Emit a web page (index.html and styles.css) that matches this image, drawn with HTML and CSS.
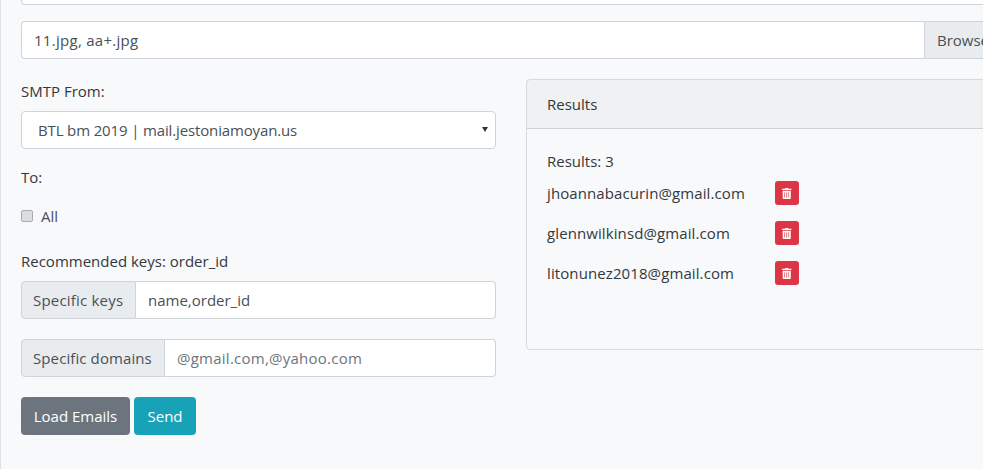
FILE: index.html
```html
<!DOCTYPE html>
<html lang="en">
<head>
<meta charset="utf-8">
<title>Send</title>
<link rel="stylesheet" href="styles.css">
</head>
<body>
<main class="page">
  <div class="top-input"></div>
  <div class="group file">
    <div class="file-name">11.jpg, aa+.jpg</div>
    <div class="addon browse">Browse</div>
  </div>
  <div class="columns">
    <form class="left">
      <label class="label">SMTP From:</label>
      <div class="select-wrap">
        <select class="select"><option>BTL bm 2019 | mail.jestoniamoyan.us</option></select>
      </div>
      <p class="label to">To:</p>
      <label class="check"><input type="checkbox"><span>All</span></label>
      <p class="label keys">Recommended keys: order_id</p>
      <div class="group spaced">
        <span class="addon prefix keys-prefix">Specific keys</span>
        <input class="input" type="text" value="name,order_id">
      </div>
      <div class="group spaced">
        <span class="addon prefix domains-prefix">Specific domains</span>
        <input class="input" type="text" placeholder="@gmail.com,@yahoo.com">
      </div>
      <div class="actions">
        <button class="btn grey" type="button">Load Emails</button>
        <button class="btn teal" type="button">Send</button>
      </div>
    </form>
    <section class="card">
      <header class="card-head">Results</header>
      <div class="card-body">
        <p class="count">Results: 3</p>
        <div class="result"><span class="email">jhoannabacurin@gmail.com</span><button class="del" type="button" aria-label="Delete"><svg viewBox="0 0 448 512"><path d="M32 464a48 48 0 0 0 48 48h288a48 48 0 0 0 48-48V128H32zm272-256a16 16 0 0 1 32 0v224a16 16 0 0 1-32 0zm-96 0a16 16 0 0 1 32 0v224a16 16 0 0 1-32 0zm-96 0a16 16 0 0 1 32 0v224a16 16 0 0 1-32 0zM432 32H312l-9.4-18.7A24 24 0 0 0 281.1 0H166.8a23.72 23.72 0 0 0-21.4 13.3L136 32H16A16 16 0 0 0 0 48v32a16 16 0 0 0 16 16h416a16 16 0 0 0 16-16V48a16 16 0 0 0-16-16z"/></svg></button></div>
        <div class="result"><span class="email">glennwilkinsd@gmail.com</span><button class="del" type="button" aria-label="Delete"><svg viewBox="0 0 448 512"><path d="M32 464a48 48 0 0 0 48 48h288a48 48 0 0 0 48-48V128H32zm272-256a16 16 0 0 1 32 0v224a16 16 0 0 1-32 0zm-96 0a16 16 0 0 1 32 0v224a16 16 0 0 1-32 0zm-96 0a16 16 0 0 1 32 0v224a16 16 0 0 1-32 0zM432 32H312l-9.4-18.7A24 24 0 0 0 281.1 0H166.8a23.72 23.72 0 0 0-21.4 13.3L136 32H16A16 16 0 0 0 0 48v32a16 16 0 0 0 16 16h416a16 16 0 0 0 16-16V48a16 16 0 0 0-16-16z"/></svg></button></div>
        <div class="result"><span class="email">litonunez2018@gmail.com</span><button class="del" type="button" aria-label="Delete"><svg viewBox="0 0 448 512"><path d="M32 464a48 48 0 0 0 48 48h288a48 48 0 0 0 48-48V128H32zm272-256a16 16 0 0 1 32 0v224a16 16 0 0 1-32 0zm-96 0a16 16 0 0 1 32 0v224a16 16 0 0 1-32 0zm-96 0a16 16 0 0 1 32 0v224a16 16 0 0 1-32 0zM432 32H312l-9.4-18.7A24 24 0 0 0 281.1 0H166.8a23.72 23.72 0 0 0-21.4 13.3L136 32H16A16 16 0 0 0 0 48v32a16 16 0 0 0 16 16h416a16 16 0 0 0 16-16V48a16 16 0 0 0-16-16z"/></svg></button></div>
      </div>
    </section>
  </div>
</main>
</body>
</html>
```
FILE: styles.css
```css
* { box-sizing: border-box; }
html, body { margin: 0; height: 469px; overflow: hidden; background: #f8f9fa; }
body { font-family: "Open Sans", "Noto Sans", sans-serif; font-size: 15px; line-height: 24px; color: #33383d; }
p { margin: 0; }

.page { width: 1002px; height: 469px; padding-left: 20px; border-left: 1px solid #dee2e6; }

.top-input { height: 5px; margin-bottom: 16px; background: #fff; border: 1px solid #ced4da; border-top: 0; border-radius: 0 0 4px 4px; }

.group { display: flex; height: 38px; }
.spaced { margin-bottom: 20px; }
.file { margin-bottom: 20px; }
.file-name { flex: 1; padding: 6px 12px; color: #495057; letter-spacing: .28px; background: #fff; border: 1px solid #ced4da; border-right: 0; border-radius: 4px 0 0 4px; }
.addon { padding: 6px 12px; color: #495057; background: #e9ecef; border: 1px solid #ced4da; }
.browse { width: 78px; border-radius: 0 4px 4px 0; }
.prefix { flex: none; padding-left: 11px; padding-right: 0; border-radius: 4px 0 0 4px; white-space: nowrap; }
.keys-prefix { width: 115px; letter-spacing: .2px; }
.domains-prefix { width: 144px; letter-spacing: .1px; }
.input { flex: 1; min-width: 0; padding: 6px 12px; font: inherit; color: #495057; background: #fff; border: 1px solid #ced4da; border-left: 0; border-radius: 0 4px 4px 0; }
.input::placeholder { color: #6c757d; opacity: 1; letter-spacing: .25px; }

.columns { display: grid; grid-template-columns: 475px 475px; column-gap: 30px; align-items: start; }
.label { display: block; }
.left > .label:first-child { margin-bottom: 8px; }
.select-wrap { position: relative; height: 38px; }
.select-wrap::after { content: ""; position: absolute; right: 8px; top: 16px; border: 3px solid transparent; border-top: 5px solid #333; border-bottom: 0; }
.select { display: block; width: 100%; height: 38px; padding: 6px 12px 6px 16px; font: inherit; letter-spacing: -.14px; color: #495057; background: #fff; border: 1px solid #ced4da; border-radius: 4px; appearance: none; }
.to { margin-top: 16px; margin-bottom: 15px; }
.check { display: flex; align-items: center; height: 24px; gap: 8px; color: #495057; }
.check input { width: 12px; height: 12px; margin: 0 0 1px; background: #dcdde0; border: 1px solid #a9abae; border-radius: 2px; appearance: none; }
.keys { margin-top: 21px; margin-bottom: 8px; }

.actions { display: flex; gap: 4px; }
.btn { height: 38px; padding: 6px 0; font: inherit; color: #fff; border: 1px solid transparent; border-radius: 4px; }
.grey { width: 109px; background: #6c757d; }
.teal { width: 62px; background: #17a2b8; }

.card { height: 271px; border: 1px solid rgba(0,0,0,.125); border-radius: 4px; }
.card-head { height: 49px; padding: 12px 20px; background: rgba(0,0,0,.03); border-bottom: 1px solid rgba(0,0,0,.125); }
.card-body { padding: 20px; }
.count { margin-bottom: 8px; }
.result { display: flex; align-items: center; height: 24px; margin-bottom: 16px; }
.email { width: 228px; letter-spacing: .1px; }
.del { display: flex; align-items: center; justify-content: center; width: 24px; height: 24px; padding: 0; background: #dc3545; border: 0; border-radius: 3px; }
.del svg { width: 9.5px; height: 11px; fill: #fff; }
```
